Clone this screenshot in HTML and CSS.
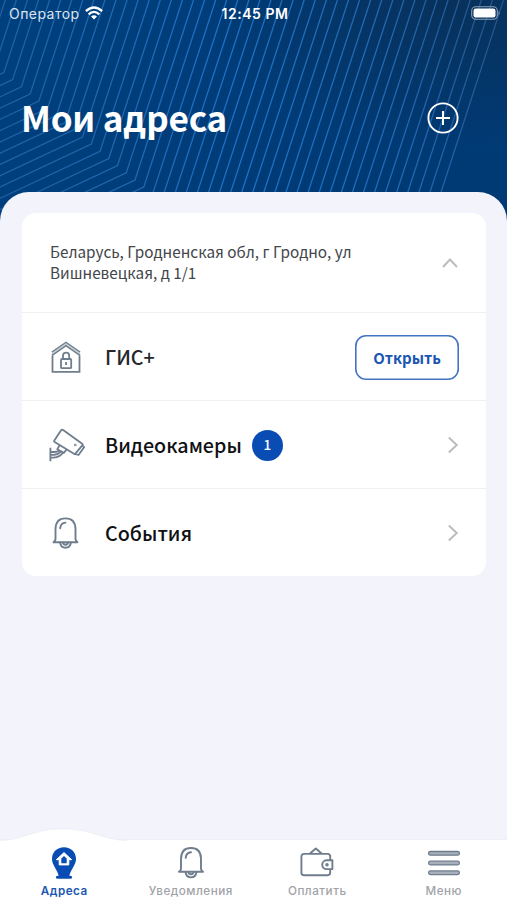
FILE: index.html
```html
<!DOCTYPE html>
<html lang="ru">
<head>
<meta charset="utf-8">
<title>Мои адреса</title>
<link rel="stylesheet" href="styles.css">
</head>
<body>
<div class="app">
  <header class="hero">
    <svg class="hero-lines" viewBox="0 0 507 225" aria-hidden="true">
      <defs>
        <linearGradient id="fade" gradientUnits="userSpaceOnUse" x1="0" y1="80" x2="507" y2="0">
          <stop offset="0" stop-color="#2e6fae" stop-opacity=".7"/>
          <stop offset=".45" stop-color="#2274ca" stop-opacity=".95"/>
          <stop offset=".75" stop-color="#276fbb" stop-opacity=".9"/>
          <stop offset="1" stop-color="#2e6299" stop-opacity=".7"/>
        </linearGradient>
      </defs>
      <path id="lines" fill="none" stroke="url(#fade)" stroke-width="1.25"/>
    </svg>
    <div class="status">
      <div class="carrier"><span>Оператор</span>
        <svg width="18" height="14" viewBox="0 0 18 14"><g fill="none" stroke="#fff" stroke-width="2.3"><path d="M.9 5.2Q9-2.2 17.100 5.200"/><path d="M3.700 8.300Q9 3.500 14.300 8.300"/></g><path d="M6 10.500Q9 8 12 10.500L9 13.500Z" fill="#fff"/></svg>
      </div>
      <div class="time">12:45 PM</div>
      <svg class="battery" width="30" height="14" viewBox="0 0 30 14"><rect x=".7" y=".7" width="25.600" height="12.600" rx="4" fill="none" stroke="#8d9fb5" stroke-width="1.100"/><rect x="2.500" y="2.500" width="22" height="9" rx="2.300" fill="#fff"/><path d="M27.600 4.700q2 2.300 0 4.600z" fill="#8d9fb5"/></svg>
    </div>
    <div class="title-row">
      <h1>Мои адреса</h1>
      <svg class="add" width="32" height="32" viewBox="0 0 32 32" fill="none" stroke="#fff" stroke-width="1.900"><circle cx="16" cy="16" r="14.600"/><path d="M16 9v14M9 16h14" stroke-width="2"/></svg>
    </div>
  </header>

  <main class="sheet">
    <section class="card">
      <div class="address">
        <p>Беларусь, Гродненская обл, г Гродно, ул<br>Вишневецкая, д 1/1</p>
        <svg class="chev-up" width="16" height="10" viewBox="0 0 16 10"><path d="M1 9 8 1.500 15 9" fill="none" stroke="#b9bbbe" stroke-width="1.900"/></svg>
      </div>
      <div class="row">
        <svg class="icon" width="36" height="36" viewBox="0 -.5 36 36" fill="none" stroke="#6f7d8d" stroke-width="1.800"><path d="M3 12.700 17 3l14 9.700M3 15.700 17 6l14 9.700"/><path d="M3 14.200 17 4.500l14 9.700" stroke="#c3c9d0" stroke-width="1.500"/><path d="M3.500 16v16.300h27V16"/><rect x="12" y="19.500" width="10.200" height="9.200" rx="1"/><path d="M14 19.500v-3.200a3.100 3.100 0 0 1 6.200 0v3.200M17.100 22.500v3"/></svg>
        <span class="label soft">ГИС+</span>
        <button class="open">Открыть</button>
      </div>
      <div class="row">
        <svg class="icon" width="36" height="36" viewBox="0 -.7 36 36" fill="none" stroke="#6f7d8d" stroke-width="1.800" stroke-linejoin="round"><path d="M12.300 2.300 5.300 12.800Q4.700 13.800 5.700 14.400L25.800 26.600 33.500 17.500Q34.100 16.700 33.200 16L14.100 2.400Q13 1.700 12.300 2.300Z"/><path d="m33.300 17.700 1.800 1.800-5.600 7.800-3.400-1"/><path d="M10.500 17.700 8.300 21.500l6.500 3.700 2.700-3.200"/><path d="M1.400 20v13.600M1.500 24.300H5Q8.500 24.200 10.100 22.600M1.500 29.900h3q6.500-.2 9.500-5M1.500 27.100h3q4.500-.1 7.600-3.500"/><circle cx="26.300" cy="17.300" r=".4"/></svg>
        <span class="label">Видеокамеры</span><span class="badge">1</span>
        <svg class="chev" width="12" height="18" viewBox="0 0 12 18"><path d="m1.800 1.500 8 7.500-8 7.500" fill="none" stroke="#b9bbbe" stroke-width="1.900"/></svg>
      </div>
      <div class="row">
        <svg class="icon" width="36" height="36" viewBox="-.5 -.4 36 36"><g id="bell" fill="none" stroke="#6f7d8d" stroke-width="1.900" stroke-linecap="round" stroke-linejoin="round"><path d="M6 23.800V13.500Q6.300 3 16 3t10 10.500v10.300q.2 1.600 2 3H4q1.800-1.400 2-3Z"/><path d="M10.700 12.800Q11.200 7.500 16 7.200M10.500 27q.8 5.400 5.500 5.400t5.500-5.400M13.300 27q.3 2.300 2.700 2.300t2.700-2.300"/></g></svg>
        <span class="label">События</span>
        <svg class="chev" width="12" height="18" viewBox="0 0 12 18"><path d="m1.800 1.500 8 7.500-8 7.500" fill="none" stroke="#b9bbbe" stroke-width="1.900"/></svg>
      </div>
    </section>
  </main>

  <nav class="tabs">
    <svg class="bump" width="127" height="13" viewBox="0 0 127 13"><path d="M0 12.500C21 12.500 34 .8 63 .8s42 11.700 64 11.700" fill="#fff" stroke="#ececf2" stroke-width=".8"/></svg>
    <a class="tab active">
      <svg width="36" height="36" viewBox="0 0 36 36"><path d="M18 2.300C11 2.300 6 7.300 6 13.800c0 6 4.500 9.500 6.700 17H11.500q-1.600 0-1.600 1.500t1.600 1.500h13q1.600 0 1.600-1.500t-1.600-1.500h-1.200C25.500 23.300 30 19.800 30 13.800 30 7.300 25 2.300 18 2.300Z" fill="#094db4"/><path d="M18 7.600 10.300 14.700h2.900v5.200h9.600v-5.200h2.900Z" fill="#fff" stroke="#fff" stroke-linejoin="round"/><path d="M18 11 15.300 13.600v4.600h5.400v-4.600Z" fill="#094db4"/></svg>
      <span>Адреса</span></a>
    <a class="tab">
      <svg width="36" height="36" viewBox="-2 0 36 36"><use href="#bell"/></svg>
      <span>Уведомления</span></a>
    <a class="tab">
      <svg width="36" height="36" viewBox="0 0 36 36" fill="none" stroke="#6f7d8d" stroke-width="1.900" stroke-linejoin="round"><path d="M31.200 15v-3.500Q31.200 8.900 28.600 8.900H5.300Q2.400 8.900 2.400 11.800v15.600Q2.400 30.200 5.300 30.200h23.300q2.600 0 2.600-2.600V24.300"/><path d="m11 8.500 5.800-5 5.800 5"/><path d="M33.400 15.300h-5.800a4.400 4.400 0 0 0 0 8.800h5.800Z"/><circle cx="28" cy="19.700" r=".8"/></svg>
      <span>Оплатить</span></a>
    <a class="tab">
      <svg width="36" height="36" viewBox="0 0 36 36" fill="#a7b0bb" stroke="#6f7d8d" stroke-width="1.300"><rect x="2.600" y="6.500" width="30.800" height="3.700" rx="1.800"/><rect x="2.600" y="16.200" width="30.800" height="3.700" rx="1.800"/><rect x="2.600" y="25.900" width="30.800" height="3.700" rx="1.800"/></svg>
      <span>Меню</span></a>
  </nav>
</div>
<script src="script.js"></script>
</body>
</html>
```
FILE: styles.css
```css
* { box-sizing: border-box; }
body { margin: 0; font-family: "Noto Sans CJK SC", "Noto Sans", sans-serif; }
.app { width: 507px; height: 900px; display: flex; flex-direction: column; overflow: hidden; background: linear-gradient(110deg, #00407f 0%, #003a75 50%, #003a74 100%); }
.hero { position: relative; flex: none; height: 192px; background: radial-gradient(ellipse 260px 150px at 460px 0, #08315b, rgba(8, 49, 91, 0)); }
.hero-lines { position: absolute; left: 0; top: 0; width: 507px; height: 225px; }
.status { position: relative; height: 28px; padding: 0 6px 0 9px; display: grid; grid-template-columns: 1fr auto 1fr; align-items: center; color: #fff; font: 14px/28px Inter, sans-serif; }
.carrier { display: flex; align-items: center; gap: 5px; color: #dbe4ee; letter-spacing: .45px; }
.carrier svg { margin-top: -2px; }
.time { font-weight: 600; font-size: 14px; letter-spacing: .55px; }
.battery { justify-self: end; margin-top: -2px; }
.title-row { position: relative; display: flex; justify-content: space-between; align-items: center; height: 60px; margin-top: 60px; padding: 0 48px 0 21px; }
h1 { margin: -2px 0 0; color: #fff; font-size: 35px; font-weight: 700; line-height: 60px; letter-spacing: -.2px; white-space: nowrap; }
.sheet { position: relative; flex: 1; background: #f2f3fb; border-radius: 29px 29px 0 0; padding: 21px 21px 0 22px; }
.card { background: #fff; border-radius: 14px; }
.address { height: 99px; padding: 0 28px; display: flex; justify-content: space-between; align-items: center; }
.address p { margin: -2px 0 0; font-size: 15.300px; line-height: 21px; color: #43464b; white-space: nowrap; }
.row { height: 88px; padding: 0 27px; display: flex; align-items: center; border-top: 1px solid #efeff2; }
.icon { flex: none; margin-right: 20px; }
.label { color: #101114; font-size: 19.700px; font-weight: 500; line-height: 30px; white-space: nowrap; }
.soft { color: #26282c; }
.badge { width: 31px; height: 31px; margin: 1px 0 0 10px; border-radius: 50%; background: #094db4; color: #fff; font-size: 13.500px; font-weight: 500; line-height: 29px; text-align: center; }
.open { width: 104px; height: 45px; margin: 1px 0 0 auto; padding: 0; border: 0; box-shadow: inset 0 0 0 1.600px #4473c2; border-radius: 11px; background: #fff; color: #1a56b2; font: 700 15px/43px "Noto Sans CJK SC", "Noto Sans", sans-serif; }
.chev { margin: 1px 0 0 auto; }
.tabs { position: relative; flex: none; height: 61px; padding-left: 1px; display: grid; grid-template-columns: repeat(4, 126.500px); background: #fff; border-top: 1px solid #eeeef3; }
.bump { position: absolute; left: 0; top: -12px; }
.tab { position: relative; display: flex; flex-direction: column; align-items: center; padding-top: 5px; color: #a0a3a8; font: 500 11.700px/20px Inter, sans-serif; letter-spacing: .5px; }
.tab.active { color: #1a56b2; font-weight: 600; }
```
FILE: script.js
```js
// Parallel bent lines: steep strokes that fold to the lower left.
let d = "";
for (let k = 0; k < 46; k++) {
  const x = 135 - 8.74 * (k - 28);
  const y = 180 - 7.17 * (k - 28);
  d += `M${x + 0.325 * y} 0L${x} ${y}L${x - 200} ${y + 94}`;
}
document.getElementById("lines").setAttribute("d", d);
```
